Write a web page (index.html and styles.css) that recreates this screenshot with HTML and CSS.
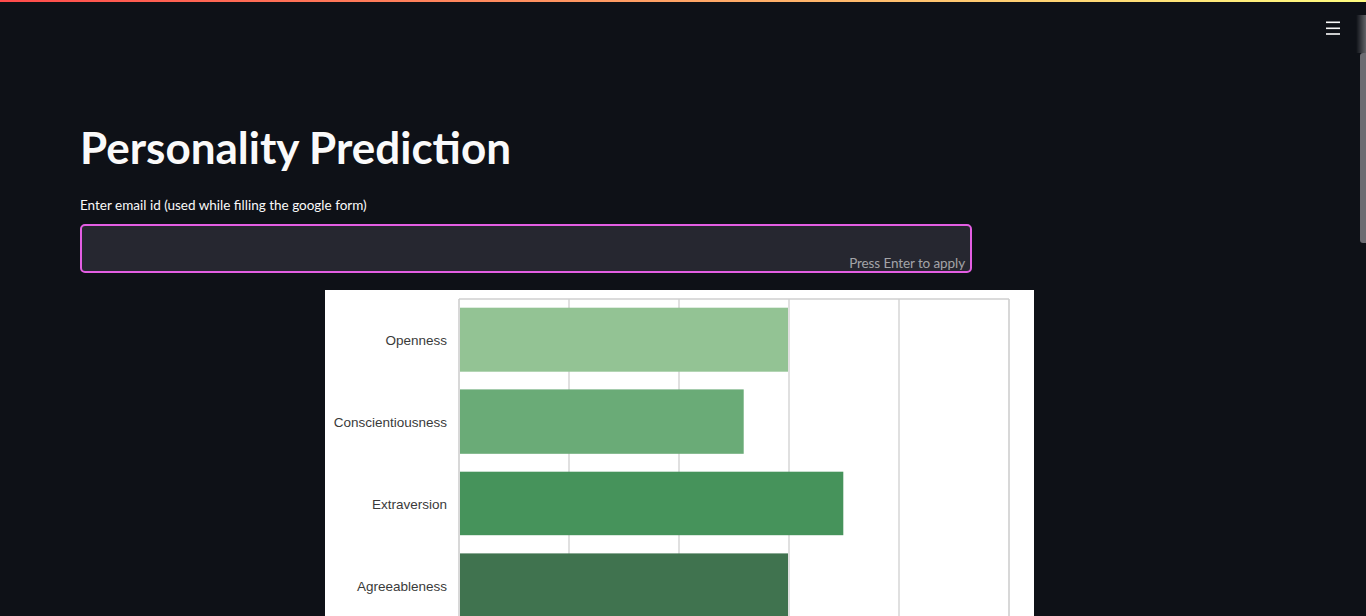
FILE: index.html
```html
<!DOCTYPE html>
<html lang="en">
<head>
<meta charset="utf-8">
<title>Personality Prediction</title>
<link rel="stylesheet" href="styles.css">
</head>
<body>
<div class="decoration"></div>
<header class="header">
  <button class="menu-btn" aria-label="Main menu">
    <svg width="14" height="14" viewBox="0 0 14 14"><rect x="0" y="0.5" width="14" height="1.6" fill="#fafafa"/><rect x="0" y="6.5" width="14" height="1.6" fill="#fafafa"/><rect x="0" y="12.2" width="14" height="1.6" fill="#fafafa"/></svg>
  </button>
</header>
<main class="main">
  <h1 class="title">Personality Prediction</h1>
  <label class="field-label" for="email">Enter email id (used while filling the google form)</label>
  <div class="input-box">
    <input id="email" class="input" type="text">
    <span class="hint">Press Enter to apply</span>
  </div>
  <div class="chart-row">
    <div class="chart">
      <svg width="709" height="360" viewBox="0 0 709 360">
        <g stroke="#d6d6d6" stroke-width="1.5">
          <line x1="244" y1="9" x2="244" y2="360"/>
          <line x1="354" y1="9" x2="354" y2="360"/>
          <line x1="464" y1="9" x2="464" y2="360"/>
          <line x1="574" y1="9" x2="574" y2="360"/>
        </g>
        <g stroke="#cfcfcf" stroke-width="1.6" fill="none">
          <line x1="134" y1="9" x2="684" y2="9"/>
          <line x1="134" y1="9" x2="134" y2="360"/>
          <line x1="684" y1="9" x2="684" y2="360"/>
        </g>
        <rect x="135" y="17.7" width="328" height="64" fill="#93c394"/>
        <rect x="135" y="99.4" width="283.7" height="64.4" fill="#6aab77"/>
        <rect x="135" y="181.7" width="383.3" height="63.5" fill="#46935b"/>
        <rect x="135" y="263.4" width="328" height="96.6" fill="#40734f"/>
        <g class="tick-label" text-anchor="end">
          <text x="122" y="55">Openness</text>
          <text x="122" y="137">Conscientiousness</text>
          <text x="122" y="219">Extraversion</text>
          <text x="122" y="300.5">Agreeableness</text>
        </g>
      </svg>
    </div>
  </div>
</main>
<div class="scroll-fade"></div>
<div class="scroll-thumb"></div>
</body>
</html>
```
FILE: styles.css
```css
* { box-sizing: border-box; }
html, body {
  margin: 0;
  padding: 0;
  height: 100%;
  overflow: hidden;
}
body {
  background: #0e1117;
  color: #fafafa;
  font-family: "Lato", "Open Sans", sans-serif;
}
.decoration {
  height: 2px;
  background: linear-gradient(90deg, #ff4b4b, #fffd80);
}
.header {
  display: flex;
  justify-content: flex-end;
  padding: 19px 26px 0 0;
  height: 40px;
}
.menu-btn {
  background: none;
  border: 0;
  padding: 0;
  width: 14px;
  height: 14px;
  display: block;
  cursor: pointer;
}
.menu-btn svg { display: block; }
.main {
  padding: 83px 0 0 80px;
  width: 972px;
}
.title {
  margin: 0;
  font-size: 44px;
  font-weight: 700;
  line-height: 1;
  letter-spacing: 0;
  color: #fafafa;
}
.field-label {
  display: block;
  margin-top: 27px;
  font-size: 13.5px;
  line-height: 18px;
  color: #fafafa;
}
.input-box {
  position: relative;
  margin-top: 10px;
  height: 49px;
  background: #262730;
  border: 2px solid #e35ee3;
  border-radius: 5px;
}
.input {
  width: 100%;
  height: 100%;
  background: transparent;
  border: 0;
  outline: none;
  color: #fafafa;
  font: inherit;
  padding: 0 12px;
}
.hint {
  position: absolute;
  right: 5px;
  bottom: 0;
  font-size: 13.5px;
  letter-spacing: -0.1px;
  color: rgba(250, 250, 250, 0.6);
}
.chart-row {
  display: flex;
  padding-left: 245px;
  margin-top: 17px;
}
.chart {
  flex: none;
  width: 709px;
  background: #ffffff;
}
.chart svg { display: block; }
.tick-label {
  font-family: "Liberation Sans", Arial, sans-serif;
  font-size: 13.5px;
  fill: #3a3a3a;
}
.scroll-fade {
  position: fixed;
  top: 15px;
  right: 0;
  width: 10px;
  height: 38px;
  background: linear-gradient(90deg, rgba(255,255,255,0), rgba(255,255,255,0.35));
}
.scroll-thumb {
  position: fixed;
  top: 53px;
  right: 0;
  width: 6px;
  height: 190px;
  background: #6c6c72;
  border-radius: 3px 0 0 3px;
}
```
